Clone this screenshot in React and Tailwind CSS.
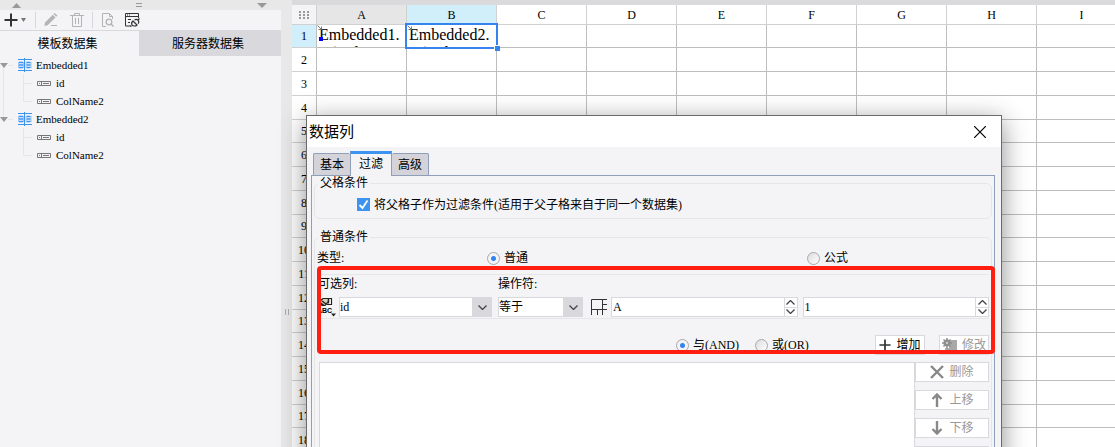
import React, { useState } from 'react';
import clsx from 'clsx';

const columns = ['A', 'B', 'C', 'D', 'E', 'F', 'G', 'H', 'I'];
const rows = Array.from({ length: 18 }, (_, i) => i + 1);

const cells = {
  A1: ['Embedded1.', 'G(ColName2)'],
  B1: ['Embedded2.', 'G(ColName2)'],
};

const datasets = [
  { name: 'Embedded1', fields: ['id', 'ColName2'] },
  { name: 'Embedded2', fields: ['id', 'ColName2'] },
];

/* Icons */

const PlusIcon = ({ size = 14, color = '#333' }) => (
  <svg width={size} height={size} viewBox="0 0 14 14" stroke={color} strokeWidth="2">
    <path d="M7 0.5v13M0.5 7h13" />
  </svg>
);

const PencilIcon = () => (
  <svg width="14" height="14" viewBox="0 0 14 14" fill="#b4b4b4">
    <path d="M1 9.5L8.8 1.7l2.7 2.7L3.7 12.2 0.5 13z" />
    <path d="M9.6 1l1.1-1 2.7 2.6-1.1 1.1z" />
    <path d="M7 12h6v1H7z" />
  </svg>
);

const TrashIcon = () => (
  <svg width="14" height="14" viewBox="0 0 14 14" fill="none" stroke="#b4b4b4">
    <path d="M0 2.5h14M4.5 2V0.5h5V2M2.5 3v10.5h9V3M5.5 5v6M8.5 5v6" />
  </svg>
);

const PreviewIcon = () => (
  <svg width="14" height="14" viewBox="0 0 14 14" fill="none" stroke="#b4b4b4">
    <path d="M5 13.5H1.5V0.5h7l3 3V6M8.5 0.5v3h3" />
    <circle cx="8" cy="9" r="2.8" strokeWidth="1.3" />
    <path d="M10 11l2.5 2.5" strokeWidth="1.5" />
  </svg>
);

const ConnectionIcon = () => (
  <svg width="15" height="14" viewBox="0 0 15 14" fill="none" stroke="#333">
    <path d="M6 13H0.5V0.5h13V5M0.5 3.5h13M2 2h1M4 2h1M3 6.5h3M3 9.5h2" />
    <path d="M8 8l4 4c-1.500 1.500-4 1.300-5-.3-.7-1.300-.2-2.800 1-3.700z" strokeWidth="1.200" />
    <path d="M9.500 7c1.200-.8 2.700-.6 3.600.4.8 1 .8 2.300 0 3.300M12.500 7.500l2-2M6.500 12.500l-1 1" strokeWidth="1.200" />
  </svg>
);

const DatasetIcon = () => (
  <svg width="14" height="14" viewBox="0 0 14 14" fill="none" stroke="#3d94f0">
    <path d="M0 1.500h14M0 12.500h14M6.500 0v14" />
    <path d="M1 4.500h4M1 7h4M1 9.500h4M8.500 4.500h4M8.500 7h4M8.500 9.500h4" strokeWidth="1.500" />
    <path d="M0.500 4v6M5.500 4v6M8 4v6M13 4v6" strokeOpacity="0.500" />
  </svg>
);

const FieldIcon = () => (
  <svg width="14" height="5" viewBox="0 0 14 5" fill="none" stroke="#777">
    <path d="M0.500 0.500h13v4H0.500zM4.500 0v5M2 2.500h1M6 2.500h6" />
  </svg>
);

const ChevronIcon = ({ up = false, width = 9 }) => (
  <svg width={width} height="5" viewBox="0 0 9 5" fill="none" stroke="#444" strokeWidth="1.300">
    <path d={up ? 'M0.500 4.500l4-4 4 4' : 'M0.500 0.500l4 4 4-4'} />
  </svg>
);

const TypeIcon = () => (
  <svg width="20" height="20" viewBox="0 0 20 20">
    <path d="M7.500 1.500h6v6h-5" fill="#fff" stroke="#222" strokeWidth="1.200" />
    <path d="M1 5l4-3.500h5.500v3L7 8.500H4z" fill="#d8cfb8" stroke="#222" strokeWidth="1.200" />
    <path d="M2 5.500l4 3M4 4l4 3M10.500 1.500v5" stroke="#222" strokeWidth="1.400" />
    <text x="-1" y="16" fontSize="7" fontWeight="bold" fontFamily="Liberation Sans, sans-serif">ABC</text>
    <path d="M13 16.500h5l-2.500 3z" fill="#222" />
  </svg>
);

const CellIcon = () => (
  <svg width="16" height="16" viewBox="0 0 16 16" fill="none" stroke="#333">
    <path d="M16 0.500H0.500V16M0.500 10.500H16M11.500 0.500v10M11.500 5.500H16M6.500 10.500V16M11.500 10.500V16" />
  </svg>
);

const ModifyIcon = () => (
  <svg width="15" height="15" viewBox="0 0 15 15" fill="#8f8f8f">
    <path d="M7 2h8v11H3v-3h4z" fill="#a8a8a8" />
    <circle cx="5" cy="5" r="3.500" />
    <path d="M5 0v10M0 5h10M1.500 1.500l7 7M8.500 1.500l-7 7" stroke="#8f8f8f" strokeWidth="1.600" />
    <circle cx="5" cy="5" r="1" fill="#ddd" />
  </svg>
);

const CrossIcon = () => (
  <svg width="14" height="14" viewBox="0 0 14 14" stroke="#888" strokeWidth="2.400">
    <path d="M1 1l12 12M13 1L1 13" />
  </svg>
);

const ArrowIcon = ({ down = false }) => (
  <svg width="14" height="14" viewBox="0 0 14 14" fill="none" stroke="#888" strokeWidth="2.400">
    <path d={down ? 'M7 0v12M2.500 8L7 12.500 11.500 8' : 'M7 14V2M2.500 6L7 1.500 11.500 6'} />
  </svg>
);

/* Sidebar */

const TreeLines = ({ parent = false, first = false, last = false }) => (
  <svg width={parent ? 18 : 37} height="18" fill="none" stroke="#e6e6e9" className="shrink-0">
    {parent ? (
      <>
        <path d={first ? 'M3.500 10v8M8 9.500h5' : 'M3.500 0v7M8 9.500h5'} />
        <path d="M0 7h8l-4 5z" fill="#999" stroke="none" />
      </>
    ) : (
      <>
        <path d={last ? 'M23.500 0v9.500h9' : 'M23.500 0v18M23.500 9.500h9'} />
        {first && <path d="M3.500 0v18" />}
      </>
    )}
  </svg>
);

const Sidebar = () => {
  const [tab, setTab] = useState(0);

  return (
    <aside className="flex w-[281px] shrink-0 flex-col bg-[#f4f4f6]">
      <div className="flex h-[10px] items-center justify-between bg-[#e8e8e8] pr-[14px] pl-3">
        <svg width="9" height="5"><path d="M0 5l4.500-5L9 5z" fill="#999" /></svg>
        <svg width="6" height="4"><path d="M0 0.500h6M0 3.500h6" stroke="#999" /></svg>
        <svg width="10" height="5"><path d="M0 0h10L5 5z" fill="#999" /></svg>
      </div>

      <div className="flex h-[21px] items-center border-b border-[#d8d8dc] pl-1">
        <button className="flex items-center gap-[3px]" aria-label="+">
          <PlusIcon />
          <svg width="5" height="4"><path d="M0 0h5L2.500 4z" fill="#777" /></svg>
        </button>
        <span className="ml-[9px] h-4 w-px bg-[#d8d8dc]" />
        <button className="ml-2"><PencilIcon /></button>
        <button className="ml-3"><TrashIcon /></button>
        <span className="ml-2 h-4 w-px bg-[#d8d8dc]" />
        <button className="ml-2"><PreviewIcon /></button>
        <button className="ml-[10px]"><ConnectionIcon /></button>
      </div>

      <div className="flex h-[25px]">
        {['模板数据集', '服务器数据集'].map((label, i) => (
          <button
            key={label}
            onClick={() => setTab(i)}
            className={clsx(
              'pr-1',
              i === 0 ? 'w-[139px]' : 'flex-1',
              tab === i ? 'bg-[#f4f4f6]' : 'bg-[#d9d9dd]'
            )}
          >
            {label}
          </button>
        ))}
      </div>

      <ul className="text-[11px]">
        {datasets.map((set, i) => (
          <li key={set.name}>
            <div className="flex h-[18px] items-center">
              <TreeLines parent first={i === 0} />
              <DatasetIcon />
              <span className="ml-1">{set.name}</span>
            </div>
            <ul>
              {set.fields.map((field, j) => (
                <li key={field} className="flex h-[18px] items-center">
                  <TreeLines first={i === 0} last={j === set.fields.length - 1} />
                  <FieldIcon />
                  <span className="ml-[5px]">{field}</span>
                </li>
              ))}
            </ul>
          </li>
        ))}
      </ul>
    </aside>
  );
};

/* Spreadsheet */

const Sheet = () => (
  <main className="min-w-0 flex-1 overflow-hidden bg-[#dadadc] pt-[5px]">
    <table className="w-[835px] table-fixed border-separate border-spacing-0 bg-white">
      <thead>
        <tr className="h-5">
          <th className="w-[25px] border-r border-b border-[#d0d0d0] bg-[#f4f4f6] p-0">
            <svg width="10" height="8" className="mx-auto" fill="#999">
              {[0, 4, 8].map((x) => [0, 3, 6].map((y) => (
                <rect key={`${x}-${y}`} x={x} y={y} width="2" height="2" />
              )))}
            </svg>
          </th>
          {columns.map((col) => (
            <th
              key={col}
              className={clsx(
                'w-[90px] border-r border-b border-[#d0d0d0] p-0 leading-4 font-normal',
                col === 'A' && 'bg-[#e6e6e6]',
                col === 'B' && 'bg-[#d0effa]'
              )}
            >
              {col}
            </th>
          ))}
        </tr>
      </thead>
      <tbody>
        {rows.map((row) => (
          <tr key={row} className={row % 4 === 1 ? 'h-[23px]' : 'h-6'}>
            <th
              className={clsx(
                'border-r border-b border-r-[#bdbdbd] border-b-[#d0d0d0] p-0 leading-4 font-normal',
                row === 1 && 'bg-[#d0effa]'
              )}
            >
              {row}
            </th>
            {columns.map((col) => {
              const lines = cells[`${col}${row}`];
              return (
                <td key={col} className="relative border-r border-b border-[#bdbdbd] p-0">
                  {lines && (
                    <div className="h-[22px] overflow-hidden pt-px pl-[2px] text-[16px] leading-[18px]">
                      {lines.map((line) => <div key={line}>{line}</div>)}
                      <svg width="6" height="6" className="absolute top-0 left-0" stroke="#777" fill="none">
                        <path d="M0.500 0.500l4 4M4.500 1.500v3h-3" />
                      </svg>
                    </div>
                  )}
                  {col === 'A' && row === 1 && (
                    <span className="absolute top-3 left-[2px] size-[4px] bg-[#0000ff]" />
                  )}
                  {col === 'B' && row === 1 && (
                    <div className="absolute -inset-[2px] z-10 border-2 border-[#3483ee]">
                      <span className="absolute -right-[4px] -bottom-[4px] size-[6px] border-t border-l border-white bg-[#3483ee]" />
                    </div>
                  )}
                </td>
              );
            })}
          </tr>
        ))}
      </tbody>
    </table>
  </main>
);

/* Form controls */

const Radio = ({ name, label, defaultChecked, className }) => (
  <label className={clsx('flex items-center gap-1', className)}>
    <input
      type="radio"
      name={name}
      defaultChecked={defaultChecked}
      className="size-[13px] appearance-none rounded-full border border-[#a8a8a8] bg-linear-to-br from-[#dcdcdc] to-white checked:bg-[radial-gradient(circle,#3483ee_0,#3483ee_2px,#f4f4f6_3px)]"
    />
    {label}
  </label>
);

const Select = ({ id, value, className }) => (
  <div className={clsx('relative h-5', className)}>
    <select
      id={id}
      defaultValue={value}
      className="block h-5 w-full appearance-none border border-[#d9d9dd] bg-white leading-[18px] text-black"
    >
      <option>{value}</option>
    </select>
    <span className="pointer-events-none absolute inset-y-0 right-0 flex w-5 items-center justify-center bg-[#d9d9dd]">
      <ChevronIcon />
    </span>
  </div>
);

const Spinner = ({ label, value, className }) => (
  <div className={clsx('flex h-5 border border-[#d9d9dd] bg-white', className)}>
    <input aria-label={label} defaultValue={value} className="h-[18px] min-w-0 flex-1 pl-px leading-[18px]" />
    <div className="flex w-[13px] flex-col divide-y divide-[#d9d9dd] border-l border-[#d9d9dd]">
      <button className="flex flex-1 items-center justify-center"><ChevronIcon up /></button>
      <button className="flex flex-1 items-center justify-center"><ChevronIcon /></button>
    </div>
  </div>
);

const Button = ({ icon, disabled, className, children }) => (
  <button
    disabled={disabled}
    className={clsx(
      'flex h-5 items-center justify-center gap-[5px] border border-[#d9d9dd] bg-white leading-4 whitespace-nowrap',
      disabled && 'text-[#999]',
      className
    )}
  >
    {icon}
    {children}
  </button>
);

const Group = ({ title, className, children }) => (
  <fieldset className={clsx('min-w-0 rounded-md border border-[#e6e6e9]', className)}>
    <legend className="ml-[3px] h-[15px] px-[2px] leading-[15px]">{title}</legend>
    {children}
  </fieldset>
);

/* Dialog */

const dialogTabs = ['基本', '过滤', '高级'];

const FilterDialog = () => {
  const [tab, setTab] = useState('过滤');

  return (
    <div
      role="dialog"
      aria-labelledby="dialog-title"
      className="absolute top-[115px] left-[306px] z-20 flex w-[696px] flex-col border border-[#6b6b6b] bg-[#f4f4f6] shadow-[0_6px_24px_rgba(0,0,0,0.45)]"
    >
      <div className="flex h-[31px] items-center justify-between bg-white pr-[15px] pl-[2px]">
        <h2 id="dialog-title" className="text-[15px]">数据列</h2>
        <button aria-label="×">
          <svg width="12" height="12" stroke="#000" strokeWidth="1.200"><path d="M0 0l12 12M12 0L0 12" /></svg>
        </button>
      </div>

      <div className="flex h-7 items-end pl-[6px]" role="tablist">
        {dialogTabs.map((name) => (
          <button
            key={name}
            role="tab"
            aria-selected={tab === name}
            onClick={() => setTab(name)}
            className={clsx(
              'border-[#8f9fb9]',
              tab === name
                ? 'relative z-10 -mb-px h-[25px] w-[42px] border-x border-t-3 border-t-[#3d94f0] bg-[#f4f4f6] pb-[2px]'
                : 'h-[22px] w-[37px] rounded-t-xs border-t bg-[#d3d3d9] first:border-l last:border-r'
            )}
          >
            {name}
          </button>
        ))}
      </div>

      <div className="mr-[6px] ml-1 h-[300px] border border-[#8f9fb9] px-[2px]">
        <Group title="父格条件">
          <label className="flex h-[27px] items-center gap-1 pl-[42px]">
            <span className="relative flex">
              <input type="checkbox" defaultChecked className="peer size-[13px] appearance-none border border-[#3d94f0] bg-white checked:bg-[#3d94f0]" />
              <svg width="13" height="13" fill="none" stroke="#fff" strokeWidth="1.800" className="pointer-events-none absolute inset-0 hidden peer-checked:block">
                <path d="M2.500 7l3 3 5-7.500" />
              </svg>
            </span>
            将父格子作为过滤条件(适用于父子格来自于同一个数据集)
          </label>
        </Group>

        <Group title="普通条件" className="mt-[11px] h-[230px]">
          <div className="flex h-[26px] items-center pl-[2px]">
            <span className="w-[170px]">类型:</span>
            <Radio name="kind" label="普通" defaultChecked className="w-[320px]" />
            <Radio name="kind" label="公式" />
          </div>

          <div className="mt-[3px] mr-[2px] ml-[3px] border-y border-[#e6e6e9] pb-px">
            <div className="flex h-[17px] items-center">
              <label htmlFor="column" className="w-[180px]">可选列:</label>
              <label htmlFor="operator">操作符:</label>
            </div>
            <div className="mt-[5px] flex items-center">
              <button className="w-[21px]"><TypeIcon /></button>
              <Select id="column" value="id" className="w-[153px]" />
              <Select id="operator" value="等于" className="ml-[6px] w-[85px]" />
              <button className="mr-1 ml-2"><CellIcon /></button>
              <Spinner label="A" value="A" className="flex-1" />
              <Spinner label="1" value="1" className="ml-[5px] flex-1" />
            </div>
          </div>

          <div className="mt-4 mr-[2px] flex items-center justify-end">
            <Radio name="join" label="与(AND)" defaultChecked className="w-[79px]" />
            <Radio name="join" label="或(OR)" className="w-[120px]" />
            <Button icon={<PlusIcon size={12} />} className="w-[50px]">增加</Button>
            <Button icon={<ModifyIcon />} disabled className="ml-[14px] w-[50px]">修改</Button>
          </div>

          <div className="mt-[7px] mr-[2px] ml-1 flex">
            <div className="h-[112px] flex-1 border border-[#d9d9dd] bg-white" />
            <div className="flex w-[74px] flex-col gap-2">
              <Button icon={<CrossIcon />} disabled>删除</Button>
              <Button icon={<ArrowIcon />} disabled>上移</Button>
              <Button icon={<ArrowIcon down />} disabled>下移</Button>
              <Button disabled />
            </div>
          </div>
        </Group>
      </div>

      {/* Highlight around the filter row */}
      <div className="pointer-events-none absolute top-[150px] left-[10px] h-[88px] w-[678px] rounded-sm border-4 border-[#ff1e10]" />
    </div>
  );
};

export default function App() {
  return (
    <div className="relative flex h-screen overflow-hidden bg-[#e8e8e8] font-['Liberation_Serif','Noto_Sans_CJK_SC',serif] text-[12px] leading-4 text-black">
      <Sidebar />
      <div className="flex w-[11px] shrink-0 items-center justify-center pt-44">
        <svg width="4" height="6"><path d="M0.500 0v6M3.500 0v6" stroke="#aaa" /></svg>
      </div>
      <Sheet />
      <FilterDialog />
    </div>
  );
}
